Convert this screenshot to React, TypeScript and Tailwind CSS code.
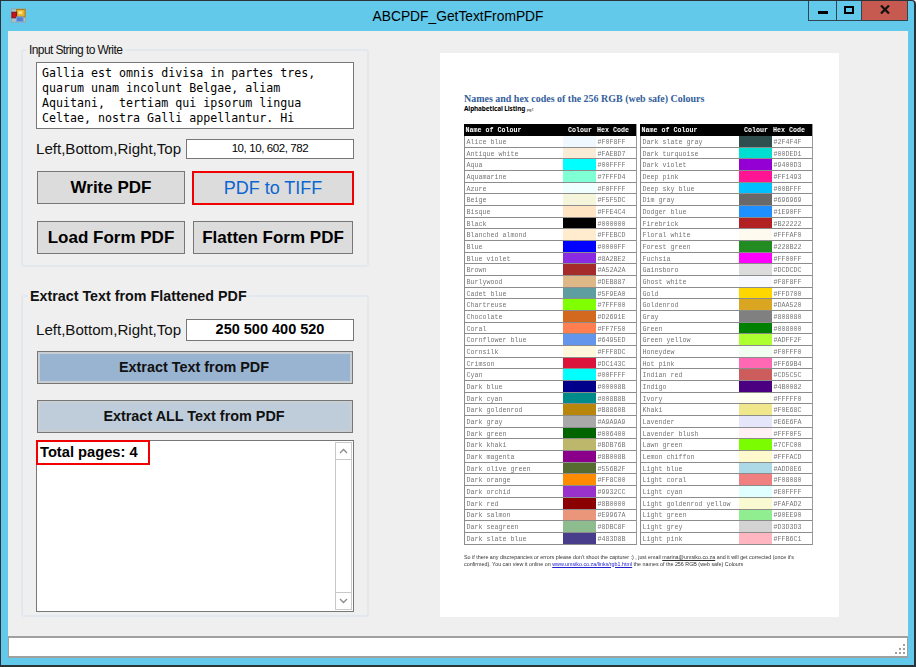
const LEFT: [string, string][] = [
  ["Alice blue", "F0F8FF"], ["Antique white", "FAEBD7"], ["Aqua", "00FFFF"], ["Aquamarine", "7FFFD4"], ["Azure", "F0FFFF"],
  ["Beige", "F5F5DC"], ["Bisque", "FFE4C4"], ["Black", "000000"], ["Blanched almond", "FFEBCD"], ["Blue", "0000FF"],
  ["Blue violet", "8A2BE2"], ["Brown", "A52A2A"], ["Burlywood", "DEB887"], ["Cadet blue", "5F9EA0"], ["Chartreuse", "7FFF00"],
  ["Chocolate", "D2691E"], ["Coral", "FF7F50"], ["Cornflower blue", "6495ED"], ["Cornsilk", "FFF8DC"], ["Crimson", "DC143C"],
  ["Cyan", "00FFFF"], ["Dark blue", "00008B"], ["Dark cyan", "008B8B"], ["Dark goldenrod", "B8860B"], ["Dark gray", "A9A9A9"],
  ["Dark green", "006400"], ["Dark khaki", "BDB76B"], ["Dark magenta", "8B008B"], ["Dark olive green", "556B2F"], ["Dark orange", "FF8C00"],
  ["Dark orchid", "9932CC"], ["Dark red", "8B0000"], ["Dark salmon", "E9967A"], ["Dark seagreen", "8DBC8F"], ["Dark slate blue", "483D8B"],
];
const RIGHT: [string, string][] = [
  ["Dark slate gray", "2F4F4F"], ["Dark turquoise", "00DED1"], ["Dark violet", "9400D3"], ["Deep pink", "FF1493"], ["Deep sky blue", "00BFFF"],
  ["Dim gray", "696969"], ["Dodger blue", "1E90FF"], ["Firebrick", "B22222"], ["Floral white", "FFFAF0"], ["Forest green", "228B22"],
  ["Fuchsia", "FF00FF"], ["Gainsboro", "DCDCDC"], ["Ghost white", "F8F8FF"], ["Gold", "FFD700"], ["Goldenrod", "DAA520"],
  ["Gray", "808080"], ["Green", "008000"], ["Green yellow", "ADFF2F"], ["Honeydew", "F0FFF0"], ["Hot pink", "FF69B4"],
  ["Indian red", "CD5C5C"], ["Indigo", "4B0082"], ["Ivory", "FFFFF0"], ["Khaki", "F0E68C"], ["Lavender", "E6E6FA"],
  ["Lavender blush", "FFF0F5"], ["Lawn green", "7CFC00"], ["Lemon chiffon", "FFFACD"], ["Light blue", "ADD8E6"], ["Light coral", "F08080"],
  ["Light cyan", "E0FFFF"], ["Light goldenrod yellow", "FAFAD2"], ["Light green", "90EE90"], ["Light grey", "D3D3D3"], ["Light pink", "FFB6C1"],
];

function ColourTable({ rows }: { rows: [string, string][] }) {
  return (
    <div className="w-[173px] flex flex-col font-['Liberation_Mono',monospace] text-[6.67px] border-r border-[#999]">
      <div className="h-[12px] bg-black text-white font-bold flex items-center">
        <div className="w-[99px] pl-[1.5px]">Name of Colour</div>
        <div className="w-[33px] pl-[5px]">Colour</div>
        <div className="flex-1 pl-[1px] whitespace-nowrap">Hex Code</div>
      </div>
      {rows.map(([name, hex]) => (
        <div key={name} className="h-[11.68px] flex items-stretch border-b border-l border-[#8c8c8c] text-[#777] bg-white">
          <div className="w-[98px] pl-[1.5px] pt-[1px] flex items-center whitespace-nowrap">{name}</div>
          <div className="w-[33px]" style={{ backgroundColor: `#${hex}` }} />
          <div className="flex-1 pl-[1.5px] pt-[1px] flex items-center">#{hex}</div>
        </div>
      ))}
    </div>
  );
}

function Btn({ children, className }: { children: string; className: string }) {
  return (
    <button className={`flex items-center justify-center bg-[#dcdcdc] text-black font-bold text-[17px] border border-[#777] whitespace-nowrap ${className}`}>
      {children}
    </button>
  );
}

function Field({ value, bold }: { value: string; bold?: boolean }) {
  return (
    <div className="flex items-center h-full">
      <span className="w-[150px] text-[15.1px] leading-none text-[#111] whitespace-nowrap">Left,Bottom,Right,Top</span>
      <div className={`w-[168px] h-full flex items-center justify-center bg-white border border-[#777] text-black ${bold ? "font-bold text-[14.5px]" : "text-[11.5px] tracking-[-0.4px]"}`}>
        {value}
      </div>
    </div>
  );
}

function Chevron({ up }: { up?: boolean }) {
  return (
    <svg width="9" height="6" viewBox="0 0 9 6" fill="none" stroke="#8a8a8a" strokeWidth="1.3">
      <path d={up ? "M1 5l3.5-3.5L8 5" : "M1 1l3.5 3.5L8 1"} />
    </svg>
  );
}

export default function App() {
  return (
    <div className="relative w-[916px] h-[667px] flex flex-col bg-[#63c9ea] border-t border-l border-r-2 border-b-2 border-[#2b3338] rounded-tr-sm overflow-hidden font-['Liberation_Sans',Arial,sans-serif]">
      {/* Title bar */}
      <div className="h-[30px] shrink-0 flex items-start pl-[10px] relative">
        <svg className="mt-[7px]" width="15" height="15" viewBox="0 0 16 15">
          <rect x="0.5" y="0.5" width="15" height="14" fill="#a9c3cc" stroke="#9aa7aa" />
          <rect x="6" y="1" width="9" height="8" fill="#e8b52a" stroke="#a37a12" />
          <rect x="8" y="3" width="4" height="3" fill="#f8e58a" />
          <rect x="1" y="4" width="5" height="6" fill="#c8141c" stroke="#7a1014" />
          <rect x="6" y="9" width="7" height="5" fill="#4c7fd6" stroke="#7f9fd8" />
        </svg>
        <div className="flex-1 text-center text-[13.8px] leading-none pt-[9px] pl-[82px] text-black">ABCPDF_GetTextFromPDF</div>
        <div className="flex h-[21px] mr-[6px] border border-t-0 border-[#2f4652] -mt-[1px]">
          <div className="w-[28px] flex items-center justify-center border-r border-[#2f4652]">
            <div className="w-[10px] h-[3px] mt-[5px] bg-black" />
          </div>
          <div className="w-[25px] flex items-center justify-center border-r border-[#2f4652]">
            <div className="w-[10px] h-[8px] border-2 border-black mb-[1px]" />
          </div>
          <div className="w-[45px] flex items-center justify-center bg-[#c75a50]">
            <svg width="10" height="9" viewBox="0 0 10 9" stroke="#111" strokeWidth="2.2" fill="none" className="mb-[1px]">
              <path d="M1 0.5l8 8M9 0.5l-8 8" />
            </svg>
          </div>
        </div>
      </div>

      {/* Client area */}
      <div className="ml-[7px] mr-[6px] h-[627px] shrink-0 bg-[#efefef] flex flex-col">
        <div className="flex-1 flex items-start">
          {/* Left column */}
          <div className="ml-[13px] w-[347px] flex flex-col">
            <fieldset className="mt-[12px] h-[224px] border-2 border-[#e3e8ee] rounded-[3px] pl-[14px] pr-[13px]">
              <legend className="-ml-[11px] px-[3px] text-[12px] leading-[14px] tracking-[-0.6px] text-[#111]">Input String to Write</legend>
              <div className="mt-[5px] h-[67px] w-[318px] -ml-[1px] bg-white border border-[#777] pl-[5px] pt-[3px] font-['DejaVu_Sans_Mono',monospace] text-[11.65px] leading-[15px] text-black whitespace-pre">
                {"Gallia est omnis divisa in partes tres,\nquarum unam incolunt Belgae, aliam\nAquitani,  tertiam qui ipsorum lingua\nCeltae, nostra Galli appellantur. Hi"}
              </div>
              <div className="mt-[10px] h-[20px] -ml-[1px]">
                <Field value="10, 10, 602, 782" />
              </div>
              <div className="mt-[12px] flex">
                <Btn className="w-[148px] h-[33px]">Write PDF</Btn>
                <button className="ml-[7px] w-[162px] h-[34px] bg-[#dcdcdc] border-2 border-[#f00000] text-[#0a66d0] text-[18px]">PDF to TIFF</button>
              </div>
              <div className="mt-[16px] flex">
                <Btn className="w-[148px] h-[33px]">Load Form PDF</Btn>
                <Btn className="ml-[8px] w-[160px] h-[33px]">Flatten Form PDF</Btn>
              </div>
            </fieldset>

            <fieldset className="mt-[21px] h-[329px] border-2 border-[#e3e8ee] rounded-[3px] pl-[14px] pr-[13px]">
              <legend className="-ml-[9px] px-[2px] text-[14.3px] leading-[16px] font-bold text-[#111] whitespace-nowrap">Extract Text from Flattened PDF</legend>
              <div className="mt-[15px] h-[22px] -ml-[1px]">
                <Field value="250 500 400 520" bold />
              </div>
              <button className="mt-[10px] block w-[316px] h-[33px] pr-[2px] bg-[#99b4d1] border border-[#777] outline-2 -outline-offset-3 outline-[#c9ced3] font-bold text-[14.4px] text-[#111]">Extract Text from PDF</button>
              <button className="mt-[16px] block w-[316px] h-[33px] pr-[2px] bg-[#bfcddb] border border-[#777] outline-2 -outline-offset-3 outline-[#c9ced3] font-bold text-[14.4px] text-[#111]">Extract ALL Text from PDF</button>
              <div className="mt-[7px] -ml-[1px] w-[318px] h-[172px] bg-white border border-[#777] flex">
                <div className="flex-1 relative">
                  <div className="w-[114px] h-[25px] -ml-[1px] -mt-[1px] border-2 border-[#f00000] pl-[2px] font-bold text-[14.7px] leading-[20px] text-black whitespace-nowrap">Total pages: 4</div>
                </div>
                <div className="w-[17px] mr-[1px] my-[1px] border border-[#c8c8c8] bg-white flex flex-col justify-between">
                  <div className="h-[17px] border-b border-[#c8c8c8] flex items-center justify-center"><Chevron up /></div>
                  <div className="h-[17px] border-t border-[#c8c8c8] flex items-center justify-center"><Chevron /></div>
                </div>
              </div>
            </fieldset>
          </div>

          {/* PDF preview */}
          <div className="ml-[72px] mt-[22px] w-[399px] h-[564px] bg-white pl-[24px] flex flex-col text-black">
            <div className="mt-[40px] font-['Liberation_Serif',serif] font-bold text-[#33609a] text-[9.97px] leading-[11px] whitespace-nowrap">Names and hex codes of the 256 RGB (web safe) Colours</div>
            <div className="font-['Noto_Sans',sans-serif] font-bold text-[6.4px] leading-[10px] tracking-[-0.1px] whitespace-nowrap">Alphabetical Listing <span className="text-[4px] font-normal">pg1</span></div>
            <div className="mt-[9px] flex gap-[3px] blur-[0.25px]">
              <ColourTable rows={LEFT} />
              <ColourTable rows={RIGHT} />
            </div>
            <div className="mt-[9px] text-[5.35px] leading-[7px] text-[#333] whitespace-nowrap blur-[0.2px]">
              <div>So if there any discrepancies or errors please don't shoot the capturer :) , just email <span className="underline text-[#333]">marina@umsiko.co.za</span> and it will get corrected (once it's</div>
              <div>confirmed). You can view it online on <span className="underline text-[#2222cc]">www.umsiko.co.za/links/rgb1.html</span> the names of the 256 RGB (web safe) Colours</div>
            </div>
          </div>
        </div>

        {/* Status bar */}
        <div className="h-[22px] shrink-0 bg-white border-t-2 border-b-2 border-l border-r border-[#a0a0a0] relative flex justify-end items-end">
          <svg width="12" height="12" viewBox="0 0 12 12" fill="#a0a0a0" className="mr-[1px] mb-[1px]">
            <rect x="9" y="1" width="2" height="2" />
            <rect x="5" y="5" width="2" height="2" /><rect x="9" y="5" width="2" height="2" />
            <rect x="1" y="9" width="2" height="2" /><rect x="5" y="9" width="2" height="2" /><rect x="9" y="9" width="2" height="2" />
          </svg>
        </div>
      </div>
    </div>
  );
}
